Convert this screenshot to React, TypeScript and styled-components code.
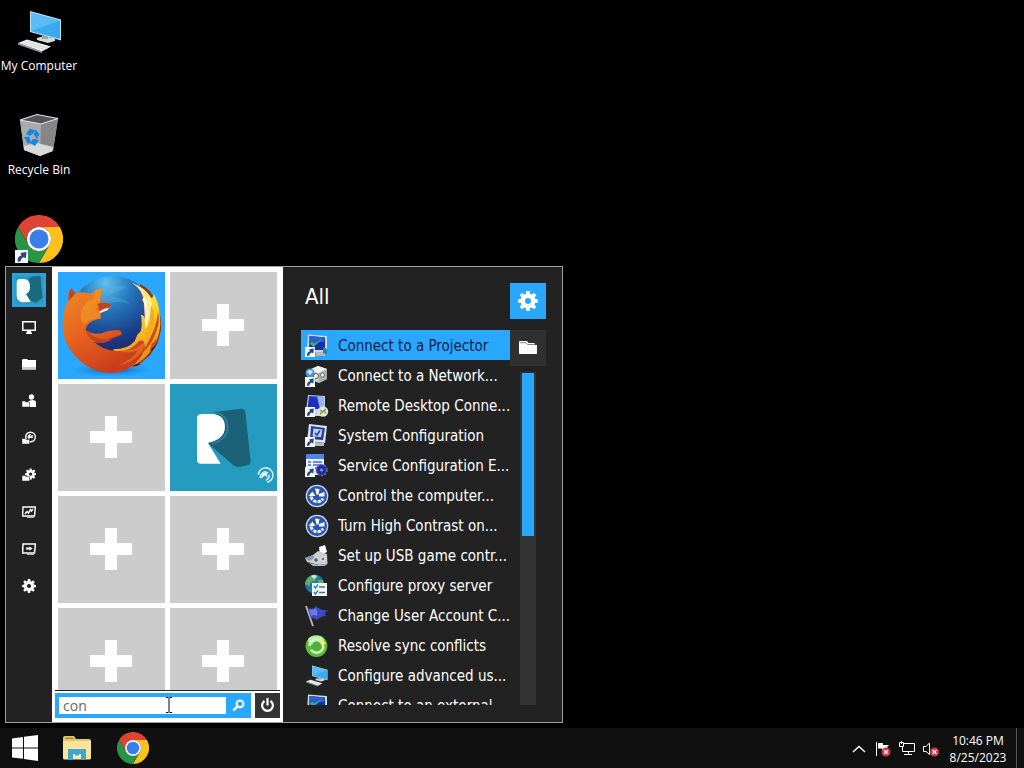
import React from "react";
import styled, { createGlobalStyle, css } from "styled-components";

const ACCENT = "#2aa8ff";

const GlobalStyle = createGlobalStyle`
  *, *::before, *::after { box-sizing: border-box; }
  body {
    margin: 0;
    background: #000;
    color: #fff;
    font-family: "Open Sans", "Noto Sans", sans-serif;
    font-size: 12px;
  }
  button, input { font: inherit; color: inherit; }
  svg { display: block; }
`;

const Screen = styled.div`
  display: flex;
  flex-direction: column;
  min-height: 100vh;
  overflow: hidden;
`;

const Desktop = styled.main`
  position: relative;
  flex: 1;
  padding-top: 7px;
`;

const resetButton = css`
  display: flex;
  align-items: center;
  justify-content: center;
  padding: 0;
  border: 0;
  background: none;
  cursor: default;
`;

const DesktopIcons = styled.div`
  display: flex;
  flex-direction: column;
  width: 78px;
`;

const DesktopIcon = styled.button`
  ${resetButton}
  flex-direction: column;
  justify-content: flex-start;
  height: 104px;
  gap: 2px;
  font-size: 12px;
  line-height: 18px;
  white-space: nowrap;
`;

const StartMenu = styled.section`
  position: absolute;
  left: 5px;
  bottom: 5px;
  display: grid;
  grid-template-columns: 46px 231px 1fr;
  grid-template-rows: minmax(0, 1fr);
  width: min(558px, calc(100vw - 10px));
  height: min(457px, calc(100vh - 50px));
  border: 1px solid #a0a0a0;
  background: #222;
  font-family: "DejaVu Sans Condensed", "Noto Sans", sans-serif;
`;

const Rail = styled.nav`
  display: flex;
  flex-direction: column;
  align-items: center;
  padding-top: 6px;
  overflow: hidden;
`;

const Avatar = styled.button`
  ${resetButton}
  flex: none;
  width: 34px;
  height: 34px;
  margin-bottom: 1px;
`;

const RailButton = styled.button`
  ${resetButton}
  flex: none;
  width: 46px;
  height: 37px;
`;

const TilePane = styled.div`
  display: flex;
  flex-direction: column;
  min-width: 0;
  background: #fff;
`;

const Tiles = styled.div`
  flex: 1;
  min-height: 0;
  overflow: hidden;
  display: grid;
  grid-template-columns: 1fr 1fr;
  grid-auto-rows: 107px;
  gap: 5px;
  padding: 5px 6px 0;
`;

const Tile = styled.button<{ $color: string }>`
  ${resetButton}
  background: ${(p) => p.$color};
`;

const SearchRow = styled.form`
  display: flex;
  gap: 4px;
  margin: 0 3px;
  padding: 2px 0 4px;
  border-top: 1px solid #222;
`;

const SearchBox = styled.div`
  position: relative;
  flex: 1;
  min-width: 0;
  display: flex;
  height: 25px;
  padding: 4px 0 4px 4px;
  background: ${ACCENT};
`;

const SearchInput = styled.input`
  flex: 1;
  width: 100%;
  min-width: 0;
  padding: 0 4px;
  border: 0;
  outline: 0;
  background: #fff;
  color: #666;
  font-family: "Open Sans", "Noto Sans", sans-serif;
  font-size: 14px;
  line-height: 17px;
`;

const SearchButton = styled.button`
  ${resetButton}
  flex: none;
  width: 25px;
`;

const Pointer = styled.svg`
  position: absolute;
  left: 110px;
  top: 4px;
`;

const PowerButton = styled.button`
  ${resetButton}
  flex: none;
  width: 25px;
  height: 25px;
  background: #333;
`;

const Results = styled.div`
  display: flex;
  flex-direction: column;
  gap: 11px;
  min-width: 0;
  padding: 16px 16px 17px 18px;
`;

const ResultsHeader = styled.header`
  display: flex;
  justify-content: space-between;
  padding-left: 4px;
`;

const Title = styled.h1`
  margin: 0;
  font-size: 22px;
  font-weight: 400;
  line-height: 28px;
`;

const SquareButton = styled.button<{ $active?: boolean }>`
  ${resetButton}
  flex: none;
  width: 36px;
  height: 36px;
  background: ${(p) => (p.$active ? ACCENT : "#303030")};
`;

const ResultsBody = styled.div`
  flex: 1;
  min-height: 0;
  display: flex;
`;

const ResultList = styled.ul`
  flex: 1;
  min-width: 0;
  margin: 0;
  padding: 0;
  list-style: none;
  overflow: hidden;
`;

const ResultButton = styled.button<{ $selected: boolean }>`
  ${resetButton}
  justify-content: flex-start;
  width: 100%;
  height: 30px;
  gap: 9px;
  padding: 2px 0 0 4px;
  background: ${(p) => (p.$selected ? ACCENT : "transparent")};
  color: ${(p) => (p.$selected ? "#0b1c4a" : "#fff")};
  font-size: 15px;
  line-height: 28px;
  white-space: nowrap;
  svg { flex: none; }
`;

const SideColumn = styled.div`
  display: flex;
  flex-direction: column;
  align-items: center;
  gap: 6px;
  width: 36px;
`;

const ScrollTrack = styled.div`
  flex: 1;
  width: 16px;
  padding: 1px 2px;
  background: #333;
`;

const ScrollThumb = styled.div`
  height: 163px;
  background: ${ACCENT};
`;

const Taskbar = styled.footer`
  display: flex;
  justify-content: space-between;
  height: 40px;
  background: #101010;
`;

const TaskButtons = styled.div`
  display: flex;
  align-items: center;
`;

const TaskButton = styled.button<{ $width: number }>`
  ${resetButton}
  width: ${(p) => p.$width}px;
  height: 40px;
`;

const Tray = styled.div`
  display: flex;
  align-items: center;
  height: 40px;
`;

const TrayButton = styled.button`
  ${resetButton}
  width: 24px;
  height: 40px;
  padding-top: 2px;
`;

const Clock = styled.time`
  width: 70px;
  padding-top: 2px;
  font-size: 12px;
  line-height: 17px;
  text-align: center;
`;

const ShowDesktop = styled.button`
  ${resetButton}
  width: 8px;
  height: 40px;
  margin-left: 3px;
  border-left: 1px solid #555;
`;

/* ---------- shared drawings ---------- */

const Chrome = ({ size }: { size: number }) => (
  <svg width={size} height={size} viewBox="0 0 48 48" aria-hidden="true">
    <path d="M3.2 12A24 24 0 0 1 44.800 12H24A12 12 0 0 0 13.600 30Z" fill="#dc4434" />
    <path d="M44.800 12A24 24 0 0 1 24 48L34.400 30A12 12 0 0 0 24 12Z" fill="#fdc11a" />
    <path d="M3.200 12A24 24 0 0 0 24 48L34.400 30A12 12 0 0 1 13.600 30Z" fill="#2a9446" />
    <circle cx="24" cy="24" r="12" fill="#fff" />
    <circle cx="24" cy="24" r="9.500" fill="#3b7de9" />
  </svg>
);

const ShortcutBadge = styled.span`
  position: absolute;
  left: 0;
  bottom: 0;
`;

const BadgedIcon = styled.span`
  position: relative;
  display: block;
`;

const Arrow = () => (
  <g>
    <rect x="0" y="13" width="10" height="10" fill="#f4f6fa" />
    <path d="M2 21.800Q1.800 17.800 5 17.200L4.300 15.300L8.800 14.600L8.300 19.400L6.800 18.500Q4.500 19 4.200 21.800Z" fill="#28457f" />
  </g>
);

const ComputerArt = () => (
  <g>
    <path d="M20 5L51 13.500V34.500L20 26Z" fill="#bfe4f8" />
    <path d="M21 6.500L50 14.400V33L21 25.200Z" fill="#3aa9ee" />
    <path d="M21 6.500L50 14.400L21 25.200Z" fill="#5bbcf5" />
    <path d="M27 32L34 30L45 32.500V35L38 37L27 34Z" fill="#d4d8da" />
    <path d="M32 29L38 30.500V33H32Z" fill="#9aa4aa" />
    <path d="M8 37L17 33.500L41 40.500L32 45.500Z" fill="#eef1f2" />
    <path d="M8 37L32 45.500V47L8 38.500Z" fill="#9ea4a7" />
    <path d="M12 37L35 43.500M15 35.600L38 42" stroke="#c2c7ca" strokeWidth=".7" />
  </g>
);

const RecycleBin = () => (
  <svg width="48" height="48" viewBox="0 0 48 48" aria-hidden="true">
    <g transform="translate(0 1)">
      <path d="M5 8L22 2.500L43 6.500L38 39L25 44L9 38Z" fill="#a5a6a8" />
      <path d="M5 8L26 12L25 44L9 38Z" fill="#a9aaac" />
      <path d="M26 12L43 6.500L38 39L25 44Z" fill="#858688" />
      <path d="M9 34L22 31L38 35L37.500 39L25 44L9 38Z" fill="#d8d9da" />
      <path d="M5 8L22 2.500L43 6.500L26 12Z" fill="#535456" stroke="#e2e2e2" strokeWidth="1.200" />
      <path d="M11 22L15 16.500L20 18.500L17.500 22L14.500 24ZM20.500 17.500L24.500 22L22 27L18.500 22ZM9 25L14 24.500L16.500 31L12.500 31.500ZM17 27.500L21 27L24 28.500L20 34L16 31.500Z" fill="#1787dc" />
    </g>
  </svg>
);

const gearPath =
  "M8.300 0H11.700L12.200 2.900L13.800 3.600L16.200 1.900L18.300 4.200L16.600 6.600L17.200 8.100L20 8.600V11.600L17.100 12.100L16.500 13.600L18.200 16L16 18.200L13.600 16.500L12.100 17.100L11.600 20H8.400L7.900 17.100L6.400 16.500L4 18.200L1.800 16L3.500 13.600L2.900 12.100L0 11.600V8.500L2.900 8L3.500 6.500L1.800 4.100L4 1.900L6.400 3.600L7.900 2.900ZM10 7A3 3 0 1 0 10 13A3 3 0 1 0 10 7Z";

const Gear = ({ size }: { size: number }) => (
  <svg width={size} height={size} viewBox="0 0 20 20" aria-hidden="true">
    <path d={gearPath} fill="#fff" fillRule="evenodd" />
  </svg>
);

const Folder = ({ width }: { width: number }) => (
  <svg width={width} height={width} viewBox="0 0 18 18" aria-hidden="true">
    <path d="M0 3Q0 2 1 2H8L9.500 4H15.500V6H18V15H0Z" fill="#fff" />
    <path d="M1 3.700H7L8.500 5.500H15" stroke="#666" strokeWidth=".8" fill="none" />
  </svg>
);

const Plus = () => (
  <svg width="43" height="43" viewBox="0 0 43 43" aria-hidden="true">
    <path d="M15 0H27V15H42V27H27V42H15V27H0V15H15Z" fill="#fff" />
  </svg>
);

const Firefox = () => (
  <svg width="107" height="107" viewBox="24 30 321 321" aria-hidden="true">
    <defs>
      <radialGradient id="globe" cx=".42" cy=".08" r=".85">
        <stop offset="0" stopColor="#5cc0ee" />
        <stop offset=".35" stopColor="#2479bd" />
        <stop offset=".75" stopColor="#1d3c86" />
        <stop offset="1" stopColor="#182460" />
      </radialGradient>
      <linearGradient id="fur" x1="0" y1="0" x2=".5" y2="1">
        <stop offset="0" stopColor="#ee8a25" />
        <stop offset=".5" stopColor="#e9651f" />
        <stop offset="1" stopColor="#c93d1c" />
      </linearGradient>
      <linearGradient id="tail" x1="0" y1="0" x2=".3" y2="1">
        <stop offset="0" stopColor="#fff6c0" />
        <stop offset=".45" stopColor="#fbdc2f" />
        <stop offset="1" stopColor="#ef8a1e" />
      </linearGradient>
      <radialGradient id="shade" cx=".5" cy=".5" r=".5">
        <stop offset="0" stopColor="#123f7c" stopOpacity=".8" />
        <stop offset="1" stopColor="#1c86dc" stopOpacity="0" />
      </radialGradient>
    </defs>
    <ellipse cx="185" cy="324" rx="125" ry="20" fill="url(#shade)" />
    <circle cx="188" cy="172" r="130" fill="url(#globe)" />
    <path d="M105 105Q160 60 235 75Q200 85 170 105Q210 100 240 125Q190 110 150 135Z" fill="#63b7e4" opacity=".3" />
    <path d="M270 66Q305 82 318 120L333 170L333 205L322 245L300 280L262 312L235 300L290 200Z" fill="#8e3420" />
    <path d="M245 62Q286 76 304 108Q314 102 310 94Q328 122 329 160Q334 180 327 214Q318 256 282 290Q248 318 210 322L190 262Q234 262 254 238L262 218L272 208Q278 185 273 158Q284 160 285 172Q292 140 276 112L284 106Q270 78 245 62Z" fill="url(#tail)" />
    <path d="M262 72Q291 98 296 139Q302 171 286 203Q284 161 282 137Q284 101 262 72ZM287 91Q309 118 309 160Q308 194 289 223Q302 176 298 141Q296 111 287 91Z" fill="#fff" opacity=".72" />
    <path d="M303 128Q317 154 312 188Q304 226 265 255Q294 212 299 174Q302 149 303 128Z" fill="#f3ad18" />
    <path d="M324 150Q331 180 319 207Q306 249 276 274Q300 232 313 200Q322 175 324 150ZM325 226L310 256L298 269L305 246Z" fill="#c94d1c" />
    <path d="M64 78L77 94Q95 86 124 96L136 85L159 79Q151 97 151 121Q166 119 182 127L180 139L151 152L152 170Q111 176 107 203Q116 211 135 215L156 214Q175 203 207 205Q218 210 214 219Q191 225 176 237Q154 247 132 239Q155 263 199 267Q240 269 262 242Q269 232 280 237L286 253L276 280L254 307Q221 332 183 333Q118 331 76 283Q34 236 38 180Q38 145 55 116Q51 94 64 78Z" fill="url(#fur)" />
    <path d="M64 78L77 94L56 117Q52 93 64 78Z" fill="#b84a26" />
    <path d="M136 86L159 79Q148 101 151 123L138 142L151 153L152 169Q116 170 104 188Q88 178 94 147Q103 119 131 107Z" fill="#f29a27" opacity=".6" />
    <path d="M141 126Q165 118 184 127L177 137Q159 139 147 149Q151 137 141 126Z" fill="#b94622" />
    <path d="M147 149Q161 139 177 137L172 145L151 153Z" fill="#fff0dc" />
    <path d="M107 184Q101 205 120 213Q141 236 173 230L214 216L207 224Q191 224 176 238Q150 250 125 233Q102 215 107 184Z" fill="#a93719" opacity=".55" />
    <path d="M203 264Q250 271 276 246L292 238L274 272Q245 304 203 312Q253 288 264 265Q235 278 203 264Z" fill="#f3a126" opacity=".4" />
    <path d="M245 313Q260 303 273 306Q260 315 245 313ZM301 268Q306 255 319 248Q312 263 301 268Z" fill="#501b21" />
  </svg>
);

const Reflector = () => (
  <svg width="107" height="107" viewBox="360 366 321 321" aria-hidden="true">
    <path d="M500 449L574 440Q585 439 586 451L602 600Q602 608 591 610L569 615Q555 615 545 605L474 544Z" fill="#1b6278" />
    <path d="M490 450Q532 456 533 497Q532 530 486 545" fill="none" stroke="#27809c" strokeWidth="6" />
    <path d="M441 470Q441 456 455 456H488Q525 459 525 496Q524 532 474 543L512 605H453Q441 605 441 593Z" fill="#fff" />
    <path d="M625 638A22 22 0 1 1 651 661M630 648Q632 630 649 629M657 638Q660 648 648 655" fill="none" stroke="#e9f8fc" strokeWidth="4" />
    <path d="M632 650L638 634L656 629L650 637L653 647L645 640Z" fill="#fff" />
  </svg>
);

const UserPicture = () => (
  <svg width="34" height="34" viewBox="36 33 102 102" aria-hidden="true">
    <path d="M36 33H138V135H36Z" fill="#2ba1dc" />
    <path d="M46 43H128V125H46Z" fill="#2b98bd" />
    <path d="M86 49L100 43H122L124 78L128 108L116 115L110 122L96 119L78 98Q97 88 86 49Z" fill="#1c6a80" />
    <path d="M50 62Q50 51 60 51H74Q91 54 90 78Q89 92 78 96L92 120L66 121Q50 117 50 100Z" fill="#f5fffc" />
  </svg>
);

/* ---------- rail icons (14px grid) ---------- */

const railIcons: { label: string; art: React.ReactNode }[] = [
  {
    label: "Computer",
    art: <path d="M0 1H14V11H9V12.500H10V14H4V12.500H5V11H0ZM1.500 2.500V9.500H12.500V2.500Z" fillRule="evenodd" />,
  },
  {
    label: "Documents",
    art: (
      <>
        <path d="M0 3.500Q0 2 1 2H5L6 3H14V12.500H0Z" />
        <path d="M0 10H14V12.500H0Z" fill="#ccc" />
      </>
    ),
  },
  {
    label: "User files",
    art: (
      <>
        <circle cx="9.500" cy="3" r="2.700" />
        <path d="M6 13V7.500Q9 5 13 6.500L14 8V13Z" />
        <path d="M0 7H3L4 8H7.500V13H0Z" stroke="#222" strokeWidth=".5" />
      </>
    ),
  },
  {
    label: "Programs",
    art: (
      <>
        <circle cx="8.500" cy="6" r="4.800" fill="none" stroke="#fff" strokeWidth="1.400" />
        <path d="M5.500 6.500Q5.500 3 9 3L8 5L11 4L10.500 7.500L8.500 6.500L7 8Z" />
        <path d="M0 7.500H3L4 8.500H7.500V13H0Z" stroke="#222" strokeWidth=".5" />
      </>
    ),
  },
  {
    label: "Program settings",
    art: (
      <>
        <g transform="translate(3 .5) scale(.56)">
          <path d={gearPath} fillRule="evenodd" />
        </g>
        <path d="M0 7.500H3L4 8.500H7.500V13H0Z" stroke="#222" strokeWidth=".5" />
      </>
    ),
  },
  {
    label: "Task manager",
    art: (
      <>
        <path d="M1 2H13.400L12.500 11H.6Z" fill="none" stroke="#fff" strokeWidth="1.400" />
        <path d="M3 9L5 6.500L6.500 8L8.500 4.500L9.500 6L11 4" fill="none" stroke="#fff" strokeWidth="1.400" />
        <path d="M5 12.500H12" stroke="#bbb" />
      </>
    ),
  },
  {
    label: "Run",
    art: (
      <>
        <path d="M1 2H13.400L12.500 11H.6Z" fill="none" stroke="#fff" strokeWidth="1.500" />
        <path d="M4 5.500H7.500V4.500L10.500 6.500L7.500 8.500V7.500H4Z" />
        <path d="M5 12.500H12" stroke="#bbb" />
      </>
    ),
  },
  {
    label: "Settings",
    art: (
      <g transform="scale(.7)">
        <path d={gearPath} fillRule="evenodd" />
      </g>
    ),
  },
];

/* ---------- result icons (24px grid) ---------- */

const EaseArt = (
  <g>
    <circle cx="12" cy="12" r="11.300" fill="#c7d4ee" />
    <circle cx="12" cy="12" r="10" fill="#2a55ac" />
    <path d="M6 12.500A6.500 6.500 0 0 0 18 14.500" fill="none" stroke="#e8f0ff" strokeWidth="3" strokeDasharray="3.500 1" />
    <path d="M11.500 10.500L10 4.500L14.500 5L13.500 10.500ZM14 10L19.500 8L19.500 12.500L14 12.500ZM3.500 12L7.500 7.500L10.500 12Z" fill="#fff" />
  </g>
);

const ProjectorArt = (
  <g>
    <path d="M3 .5L22 2V19L2 18Z" fill="#cdd8e0" />
    <path d="M4.500 2L20 3.500V16L4 16Z" fill="#1230a6" />
    <path d="M4.500 2L20 3.500L19 8Q10 8 4.500 12Z" fill="#2c5fcb" />
    <path d="M5 9.500L8.500 13L17 5L9.500 9.500L7 8Z" fill="#3fb866" />
    <path d="M11 18H20V22H11Z" fill="#aeb8be" />
    <path d="M18 13L22 15V20L18 19Z" fill="#28829c" />
    <Arrow />
  </g>
);

const results: { label: string; art: React.ReactNode }[] = [
  { label: "Connect to a Projector", art: ProjectorArt },
  {
    label: "Connect to a Network...",
    art: (
      <g>
        <path d="M4 6L13 2L22 5V15L14 19L4 15Z" fill="#c9cdd0" />
        <path d="M4 6L14 9L22 5L13 2Z" fill="#f6f7f8" />
        <path d="M14 9L22 5V15L14 19Z" fill="#a9aeb2" />
        <circle cx="5" cy="9" r="4.500" fill="#4597cf" />
        <path d="M2 8Q5 4 8 8L5 11Z" fill="#cde9f5" />
        <circle cx="11" cy="12" r="2.500" fill="#f4f4f4" stroke="#555" />
        <circle cx="17.500" cy="11" r="2" fill="#eee" stroke="#777" />
        <Arrow />
      </g>
    ),
  },
  {
    label: "Remote Desktop Conne...",
    art: (
      <g>
        <path d="M3 1L20 2V16L1 17Z" fill="#c4cff0" />
        <path d="M4 2L19 3V14.500L2.500 15.500Z" fill="#1a31bd" />
        <path d="M12 2.500L19 3V14.500L15 14.800Z" fill="#9db0f2" />
        <path d="M9 16H20V22H9Z" fill="#cfd4da" />
        <circle cx="18" cy="17.500" r="5.200" fill="#dfe8d3" />
        <path d="M15 16L17.500 18L15 20M21 15L18.500 17L21 19" stroke="#5f9b48" strokeWidth="1.300" fill="none" />
        <Arrow />
      </g>
    ),
  },
  {
    label: "System Configuration",
    art: (
      <g>
        <path d="M4 0L22 2L20 19L2 17Z" fill="#dfe4f0" />
        <path d="M6 2L20 4L18 16L5 15Z" fill="#263d9c" />
        <path d="M8.500 4.500L17.500 5.500L16 13L7.500 12.500Z" fill="#b8cbfa" />
        <path d="M10 9L12 11L15 6.500" stroke="#263d9c" strokeWidth="1.500" fill="none" />
        <path d="M10 18L19 19V22H10Z" fill="#b5bac3" />
        <Arrow />
      </g>
    ),
  },
  {
    label: "Service Configuration E...",
    art: (
      <g>
        <path d="M1 0H19V21H1Z" fill="#e9effc" />
        <path d="M1 0H19V5H1Z" fill="#4b85e8" />
        <path d="M3 8H6M3 11H6M8 8H17M8 11H17M8 14H15" stroke="#4b6fc2" strokeWidth="1.500" />
        <circle cx="16.500" cy="16" r="5.500" fill="#26309a" stroke="#6470c4" strokeDasharray="2 1.500" strokeWidth="1.500" />
        <circle cx="16.500" cy="16" r="1.500" fill="#8993d8" />
        <Arrow />
      </g>
    ),
  },
  { label: "Control the computer...", art: EaseArt },
  { label: "Turn High Contrast on...", art: EaseArt },
  {
    label: "Set up USB game contr...",
    art: (
      <g>
        <path d="M14 3L20 1L22 8L15 11Z" fill="#fff" />
        <path d="M0 14L8 11L13 7L22 10L22.500 20L14 21L2 18Z" fill="#c8ced2" />
        <path d="M0 14L8 11L10 14L4 17Z" fill="#8d9aa3" />
        <path d="M4 19L14 21L22 20L20 22H8Z" fill="#aab9c7" />
        <circle cx="11" cy="16" r="2.500" fill="#5e6972" stroke="#eee" />
        <circle cx="18" cy="15" r="2" fill="#6f7b84" stroke="#eee" />
      </g>
    ),
  },
  {
    label: "Configure proxy server",
    art: (
      <g>
        <circle cx="9.500" cy="10" r="9.500" fill="#2273b8" />
        <path d="M3 4Q8 -1 13 2L10 7L6 8L4 12L0 10Q0 7 3 4ZM13 6L18 6L18.500 11L13 11Z" fill="#5fae5b" />
        <path d="M6 2Q9 0 12 2L9 5Z" fill="#c4e9f2" />
        <path d="M7 9H22V22H7Z" fill="#f4f7f9" />
        <path d="M9 12L10.500 14L13 10.500M9 18L10.500 20L13 16.500" stroke="#237fc0" strokeWidth="1.400" fill="none" />
        <path d="M14 13H20M14 18.500H20" stroke="#526c80" strokeWidth="1.300" />
      </g>
    ),
  },
  {
    label: "Change User Account C...",
    art: (
      <g>
        <path d="M1 2L8 22" stroke="#b4bdc6" strokeWidth="1.800" />
        <path d="M3 4Q8 6 11 2Q16 7 23 6L20 9L21 12Q16 12 12 16Q8 13 6 15Z" fill="#3b49bd" />
        <path d="M4 5Q8 7 11 4Q13 8 12 12Q9 10 6 12Z" fill="#6c7cdf" />
      </g>
    ),
  },
  {
    label: "Resolve sync conflicts",
    art: (
      <g>
        <circle cx="11.500" cy="12" r="10.900" fill="#5dbb3c" />
        <ellipse cx="11" cy="6.500" rx="8" ry="4.800" fill="#c2ecaa" />
        <path d="M4.500 12A7 7 0 0 1 16 7M18.500 12A7 7 0 0 1 6 16" fill="none" stroke="#d5f5c0" strokeWidth="2.400" />
        <path d="M15 4L21 9L17 14Z" fill="#f0ee76" />
        <circle cx="11.500" cy="12" r="4.500" fill="#52ae3a" />
      </g>
    ),
  },
  {
    label: "Configure advanced us...",
    art: (
      <g transform="translate(-3 -1) scale(.5)">
        <ComputerArt />
      </g>
    ),
  },
  { label: "Connect to an external...", art: ProjectorArt },
];

const tileKinds = ["firefox", "empty", "empty", "reflector", "empty", "empty", "empty", "empty"];

const tileView: Record<string, { label: string; color: string; art: React.ReactNode }> = {
  firefox: { label: "Firefox", color: ACCENT, art: <Firefox /> },
  reflector: { label: "Reflector", color: "#259cbf", art: <Reflector /> },
  empty: { label: "Add tile", color: "#ccc", art: <Plus /> },
};

const Cross = ({ x, y }: { x: number; y: number }) => (
  <g>
    <circle cx={x} cy={y} r="4.500" fill="#cf3340" />
    <path d={`M${x - 2} ${y - 2}l4 4m0 -4l-4 4`} stroke="#fff" strokeWidth="1.300" />
  </g>
);

export default function App() {
  return (
    <Screen>
      <GlobalStyle />
      <Desktop>
        <DesktopIcons>
          <DesktopIcon>
            <svg width="48" height="48" viewBox="5 1 48 48" aria-hidden="true">
              <ComputerArt />
            </svg>
            My Computer
          </DesktopIcon>
          <DesktopIcon>
            <RecycleBin />
            Recycle Bin
          </DesktopIcon>
          <DesktopIcon aria-label="Browser">
            <BadgedIcon>
              <Chrome size={48} />
              <ShortcutBadge>
                <svg width="13" height="13" viewBox="0 13 10 10" aria-hidden="true">
                  <Arrow />
                </svg>
              </ShortcutBadge>
            </BadgedIcon>
          </DesktopIcon>
        </DesktopIcons>

        <StartMenu aria-label="Start menu">
          <Rail aria-label="Places">
            <Avatar aria-label="Account">
              <UserPicture />
            </Avatar>
            {railIcons.map((item) => (
              <RailButton key={item.label} aria-label={item.label}>
                <svg width="14" height="14" viewBox="0 0 14 14" fill="#fff" aria-hidden="true">
                  {item.art}
                </svg>
              </RailButton>
            ))}
          </Rail>

          <TilePane>
            <Tiles>
              {tileKinds.map((kind, i) => (
                <Tile key={i} $color={tileView[kind].color} aria-label={tileView[kind].label}>
                  {tileView[kind].art}
                </Tile>
              ))}
            </Tiles>
            <SearchRow onSubmit={(e) => e.preventDefault()}>
              <SearchBox>
                <SearchInput type="text" aria-label="Search" defaultValue="con" />
                <SearchButton type="submit" aria-label="Search">
                  <svg width="13" height="13" viewBox="0 0 13 13" aria-hidden="true">
                    <circle cx="8" cy="4.800" r="3.400" fill="none" stroke="#fff" strokeWidth="2" />
                    <path d="M5.500 7.300L1.200 11.600" stroke="#fff" strokeWidth="2.400" />
                  </svg>
                </SearchButton>
                <Pointer width="8" height="16" viewBox="0 0 8 16" aria-hidden="true">
                  <path d="M1 .5H3.500M4.500 .5H7M4 1V15M1 15.500H3.500M4.500 15.500H7" stroke="#000" fill="none" />
                </Pointer>
              </SearchBox>
              <PowerButton type="button" aria-label="Power">
                <svg width="15" height="15" viewBox="0 0 15 15" fill="none" stroke="#fff" strokeWidth="2.200" aria-hidden="true">
                  <path d="M4.500 3A5.400 5.400 0 1 0 10.500 3M7.500 0V7.500" />
                </svg>
              </PowerButton>
            </SearchRow>
          </TilePane>

          <Results>
            <ResultsHeader>
              <Title>All</Title>
              <SquareButton $active aria-label="Search settings">
                <Gear size={20} />
              </SquareButton>
            </ResultsHeader>
            <ResultsBody>
              <ResultList>
                {results.map((item, i) => (
                  <li key={item.label}>
                    <ResultButton $selected={i === 0}>
                      <svg width="24" height="24" viewBox="0 0 24 24" aria-hidden="true">
                        {item.art}
                      </svg>
                      {item.label}
                    </ResultButton>
                  </li>
                ))}
              </ResultList>
              <SideColumn>
                <SquareButton aria-label="Open file location">
                  <Folder width={18} />
                </SquareButton>
                <ScrollTrack>
                  <ScrollThumb />
                </ScrollTrack>
              </SideColumn>
            </ResultsBody>
          </Results>
        </StartMenu>
      </Desktop>

      <Taskbar>
        <TaskButtons>
          <TaskButton $width={50} aria-label="Start">
            <svg width="26" height="26" viewBox="0 0 26 26" fill="#fff" aria-hidden="true">
              <path d="M0 3.500L11 2V12.400H0ZM12 1.800L26 0V12.400H12ZM0 13.400H11V23.800L0 22.400ZM12 13.400H26V26L12 24Z" />
            </svg>
          </TaskButton>
          <TaskButton $width={54} aria-label="File Explorer">
            <svg width="28" height="24" viewBox="0 0 28 24" aria-hidden="true">
              <path d="M0 2Q0 0 2 0H11L13 3H26Q28 3 28 5V22H0Z" fill="#e3c765" />
              <path d="M3 1.500H10L11 3H2Z" fill="#a48c3a" />
              <path d="M0 5H28V22Q28 23.500 26.500 23.500H1.500Q0 23.500 0 22Z" fill="#f8e49c" />
              <path d="M5 13H23V24H18V18H10V24H5Z" fill="#3ba6d0" />
              <path d="M10 18H18V21H10Z" fill="#fdf3c2" />
              <path d="M12 18H16V19.500H12Z" fill="#3ba6d0" />
            </svg>
          </TaskButton>
          <TaskButton $width={58} aria-label="Browser">
            <Chrome size={32} />
          </TaskButton>
        </TaskButtons>
        <Tray>
          <TrayButton aria-label="Show hidden icons">
            <svg width="14" height="8" viewBox="0 0 14 8" aria-hidden="true">
              <path d="M1 7L7 1.500L13 7" fill="none" stroke="#fff" strokeWidth="1.400" />
            </svg>
          </TrayButton>
          <TrayButton aria-label="Notifications">
            <svg width="16" height="16" viewBox="0 0 16 16" aria-hidden="true">
              <path d="M1.500 1V15" stroke="#fff" />
              <path d="M3 2H8V4H14L12 6L14 9H7V7.500H3Z" fill="#fff" />
              <Cross x={11} y={11} />
            </svg>
          </TrayButton>
          <TrayButton aria-label="Network">
            <svg width="16" height="16" viewBox="0 0 16 16" fill="none" stroke="#fff" aria-hidden="true">
              <path d="M5 2.500H15.500V10.500H3.500V6M9.500 11V13.500M5 13.500H13M.5 1.500H4.500V5.500H.5ZM2.500 0V3" />
            </svg>
          </TrayButton>
          <TrayButton aria-label="Volume">
            <svg width="16" height="16" viewBox="0 0 16 16" fill="none" aria-hidden="true">
              <path d="M.5 5.500H3L6.500 2V13.500L3 10.500H.5Z" stroke="#fff" />
              <Cross x={11.5} y={11} />
            </svg>
          </TrayButton>
          <Clock>
            10:46 PM
            <br />
            8/25/2023
          </Clock>
          <ShowDesktop aria-label="Show desktop" />
        </Tray>
      </Taskbar>
    </Screen>
  );
}
